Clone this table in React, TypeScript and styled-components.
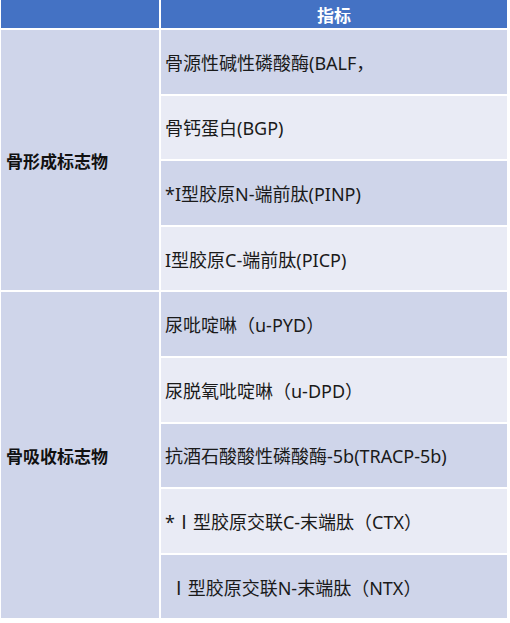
import React from "react"
import styled, { createGlobalStyle } from "styled-components"

const GlobalStyle = createGlobalStyle`
    html, body {
        margin: 0;
        padding: 0;
        background: #fff;
    }
    body {
        font-family: "Noto Sans", "Noto Sans CJK SC", sans-serif;
    }
`

const groups = [
    {
        label: "骨形成标志物",
        items: [
            "骨源性碱性磷酸酶(BALF，",
            "骨钙蛋白(BGP)",
            "*I型胶原N-端前肽(PINP)",
            "I型胶原C-端前肽(PICP)",
        ],
    },
    {
        label: "骨吸收标志物",
        items: [
            "尿吡啶啉（u-PYD）",
            "尿脱氧吡啶啉（u-DPD）",
            "抗酒石酸酸性磷酸酶-5b(TRACP-5b)",
            "*Ⅰ型胶原交联C-末端肽（CTX）",
            " Ⅰ型胶原交联N-末端肽（NTX）",
        ],
    },
]

const StyledTable = styled.div`
    display: grid;
    grid-template-columns: 158px 346px;
    grid-template-rows: 28px repeat(9, 63.6px);
    column-gap: 2px;
    row-gap: 2px;
    width: 506px;
    margin-left: 1px;
`

const HeaderCell = styled.div`
    background: #4472c4;
    color: #fff;
    font-family: "Noto Sans CJK SC", sans-serif;
    font-weight: 700;
    font-size: 17px;
    display: flex;
    align-items: center;
    justify-content: center;
`

const LabelCell = styled.div<{ span: number }>`
    grid-row: span ${({ span }) => span};
    grid-column: 1;
    background: #cfd5ea;
    display: flex;
    align-items: center;
    padding-left: 5px;
    font-family: "Noto Sans CJK SC", sans-serif;
    font-size: 17px;
    font-weight: 700;
    color: #111;
`

const ItemCell = styled.div<{ dark?: boolean }>`
    grid-column: 2;
    background: ${({ dark }) => (dark ? "#cfd5ea" : "#e9ebf5")};
    display: flex;
    align-items: center;
    padding-left: 4px;
    font-size: 18px;
    color: #1a1a1a;
    white-space: pre;
`

export default function App() {
    return <>
        <GlobalStyle />
        <StyledTable>
            <HeaderCell />
            <HeaderCell>指标</HeaderCell>
            {groups.map(g => (
                <React.Fragment key={g.label}>
                    <LabelCell span={g.items.length}>{g.label}</LabelCell>
                    {g.items.map((item, i) => (
                        <ItemCell key={item} dark={i % 2 === 0}>{item}</ItemCell>
                    ))}
                </React.Fragment>
            ))}
        </StyledTable>
    </>
}
